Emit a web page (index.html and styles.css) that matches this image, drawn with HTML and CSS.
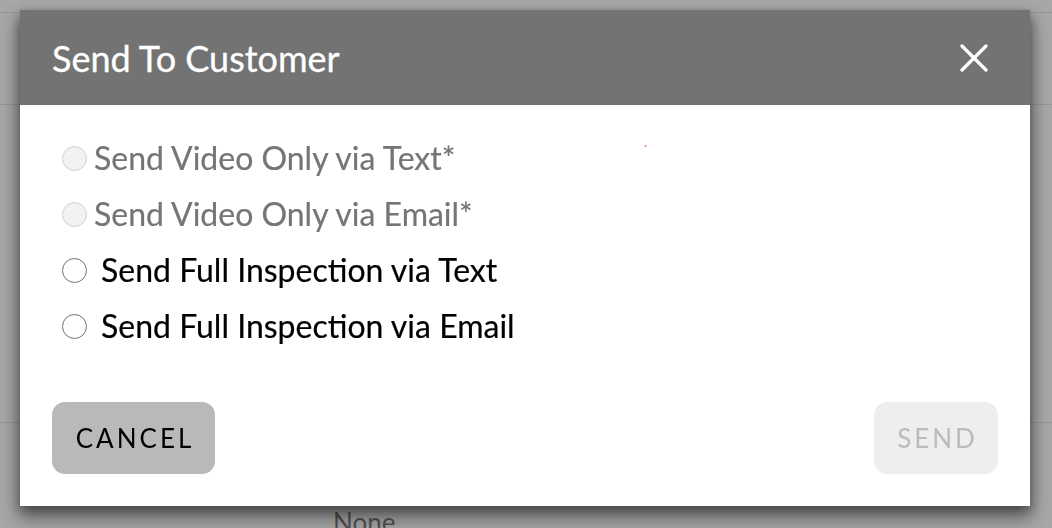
FILE: index.html
```html
<!DOCTYPE html>
<html lang="en">
<head>
<meta charset="utf-8">
<title>Send To Customer</title>
<link rel="stylesheet" href="styles.css">
</head>
<body>
<div class="page">
  <div class="bg-row r1"></div>
  <div class="bg-row r2"></div>
  <div class="bg-row r3"></div>
  <div class="bg-cell">None</div>
</div>

<div class="overlay">
  <div class="modal" role="dialog" aria-labelledby="modal-title">
    <div class="modal-header">
      <h2 class="modal-title" id="modal-title">Send To Customer</h2>
      <button class="close-btn" aria-label="Close">
        <svg width="28" height="28" viewBox="0 0 28 28"><path d="M2 2 L26 26 M26 2 L2 26" stroke="#fff" stroke-width="3.2" stroke-linecap="round" fill="none"/></svg>
      </button>
    </div>
    <div class="modal-body">
      <div class="options">
        <label class="option disabled"><span class="radio"></span><span class="label">Send Video Only via Text*</span></label>
        <label class="option disabled"><span class="radio"></span><span class="label">Send Video Only via Email*</span></label>
        <label class="option"><span class="radio"></span><span class="label">Send Full Inspection via Text</span></label>
        <label class="option"><span class="radio"></span><span class="label">Send Full Inspection via Email</span></label>
      </div>
      <span class="speck"></span>
    </div>
    <div class="modal-footer">
      <button class="btn btn-cancel">CANCEL</button>
      <button class="btn btn-send" disabled>SEND</button>
    </div>
  </div>
</div>
</body>
</html>
```
FILE: styles.css
```css
* { box-sizing: border-box; }
html, body { margin: 0; padding: 0; }
body {
  width: 1052px;
  height: 528px;
  overflow: hidden;
  background: #f7f7f7;
  font-family: Lato, "Open Sans", Arial, sans-serif;
}
.page { display: flex; flex-direction: column; }
.bg-row { border-bottom: 1px solid #dedede; }
.r1 { height: 13px; }
.r2 { height: 92px; }
.r3 { height: 318px; }
.bg-cell {
  padding: 84px 0 0 333px;
  font-size: 26px;
  color: #7a7a7a;
  line-height: 30px;
}

.overlay {
  position: fixed;
  inset: 0;
  background: rgba(0, 0, 0, 0.32);
  padding: 10px 0 0 20px;
}
.modal {
  width: 1010px;
  height: 496px;
  background: #fff;
  display: flex;
  flex-direction: column;
  box-shadow: 0 10px 18px 2px rgba(0, 0, 0, 0.45), 0 4px 10px rgba(0, 0, 0, 0.3);
}
.modal-header {
  height: 95px;
  flex: none;
  background: #737373;
  display: flex;
  align-items: center;
  justify-content: space-between;
  padding: 0 42px 0 32px;
}
.modal-title {
  margin: 0;
  color: #fff;
  font-size: 36px;
  font-weight: 400;
  line-height: 1;
  -webkit-text-stroke: 0.3px #fff;
}
.close-btn {
  background: none;
  border: 0;
  padding: 0;
  width: 28px;
  height: 28px;
  display: flex;
}
.modal-body {
  flex: 1;
  padding: 24px 32px 0 42px;
  position: relative;
}
.options { display: flex; flex-direction: column; }
.option {
  height: 56px;
  display: flex;
  align-items: center;
  font-size: 32px;
  color: #000;
}
.label { -webkit-text-stroke: 0.2px currentColor; }
.radio {
  width: 25px;
  height: 25px;
  border-radius: 50%;
  border: 1.5px solid #707070;
  background: #fff;
  flex: none;
  margin-right: 14px;
  position: relative;
  top: 1px;
}
.option.disabled { color: #757575; }
.option.disabled .radio {
  border-color: #d0d0d0;
  background: #f2f2f2;
  margin-right: 7px;
}
.speck {
  position: absolute;
  left: 624px;
  top: 40px;
  width: 3px;
  height: 2px;
  background: #f3b3b9;
}
.modal-footer {
  flex: none;
  display: flex;
  justify-content: space-between;
  padding: 0 32px 32px 32px;
}
.btn {
  height: 72px;
  border: 0;
  border-radius: 13px;
  font-family: Lato, "Open Sans", Arial, sans-serif;
  font-size: 26px;
  letter-spacing: 3px;
  padding: 0 0 0 3px;
}
.btn-cancel { width: 163px; background: #b9b9b9; color: #000; }
.btn-send { width: 124px; background: #eeeeee; color: #bbbbbb; }
```
